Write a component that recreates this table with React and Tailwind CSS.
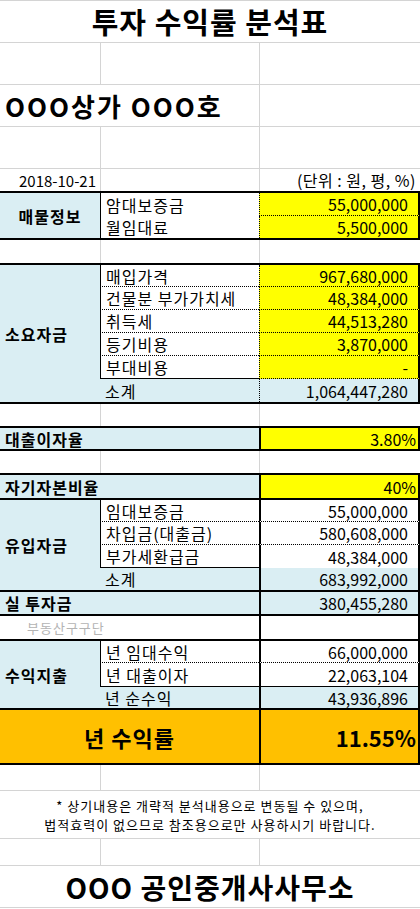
const FONT = "font-['Noto_Sans_CJK_KR','Noto_Sans',sans-serif]";
const GRID = 'grid grid-cols-[100px_159px_161px]';
const LABEL = 'flex items-center whitespace-nowrap pl-[5px] tracking-[1px]';
const VALUE = 'flex items-center justify-end whitespace-nowrap pr-[10px]';
const PCT = 'flex items-center justify-end whitespace-nowrap pr-[2px]';
const HEAD = 'flex items-center whitespace-nowrap pl-[5px] text-[16px] font-semibold tracking-[1px]';

function Blank({ className = '' }) {
  return (
    <div className={`${GRID} ${className}`}>
      <div />
      <div className="border-l border-[#d4d4d4]" />
      <div className="border-l border-[#d4d4d4]" />
    </div>
  );
}

export default function App() {
  return (
    <div className={`${FONT} w-[420px] bg-white text-[16px] leading-none text-black`}>
      <div className="flex h-[43px] items-center justify-center border-y border-[#d4d4d4] text-[29px] font-bold tracking-[1px]">투자 수익률 분석표</div>
      <Blank className="h-[42px] border-b border-[#d4d4d4]" />
      <div className={`${GRID} h-[42px] border-b border-[#d4d4d4]`}>
        <div className="col-span-2 flex items-center whitespace-nowrap pl-[5px] text-[26px] font-bold tracking-[2px]">OOO상가 OOO호</div>
        <div className="border-l border-[#d4d4d4]" />
      </div>
      <Blank className="h-[42px] border-b border-[#d4d4d4]" />

      <div className={`${GRID} h-[22px] text-[15px]`}>
        <div className="flex items-center justify-end pr-[4px]">2018-10-21</div>
        <div className="border-l border-[#d4d4d4]" />
        <div className="flex items-center justify-end border-l border-[#d4d4d4] pr-[4px] text-[16px] tracking-[0.5px]">(단위 : 원, 평, %)</div>
      </div>

      {/* 매물정보 */}
      <div className={`${GRID} border-y-2 border-black`}>
        <div className="row-span-2 flex items-center justify-center bg-[#daeef3] text-[16px] font-bold tracking-[1px]">매물정보</div>
        <div className={`${LABEL} h-[23px] border-l border-black`}>암대보증금</div>
        <div className={`${VALUE} h-[23px] border-b border-l border-r-2 border-black bg-[#ffff00] [border-bottom-style:dotted] [border-left-style:dotted]`}>55,000,000</div>
        <div className={`${LABEL} h-[22px] border-l border-black`}>월임대료</div>
        <div className={`${VALUE} h-[22px] border-l border-r-2 border-black bg-[#ffff00] [border-left-style:dotted]`}>5,500,000</div>
      </div>

      <Blank className="h-[23px]" />

      {/* 소요자금 */}
      <div className={`${GRID} border-y-2 border-black`}>
        <div className="row-span-6 flex items-center bg-[#daeef3] pl-[5px] text-[16px] font-bold tracking-[1px]">소요자금</div>
        <div className={`${LABEL} h-[22px] border-b border-l border-black [border-bottom-style:dotted]`}>매입가격</div>
        <div className={`${VALUE} h-[22px] border-b border-l border-r-2 border-black bg-[#ffff00] [border-bottom-style:dotted] [border-left-style:dotted]`}>967,680,000</div>
        <div className={`${LABEL} h-[23px] border-b border-l border-black [border-bottom-style:dotted]`}>건물분 부가가치세</div>
        <div className={`${VALUE} h-[23px] border-b border-l border-r-2 border-black bg-[#ffff00] [border-bottom-style:dotted] [border-left-style:dotted]`}>48,384,000</div>
        <div className={`${LABEL} h-[23px] border-b border-l border-black [border-bottom-style:dotted]`}>취득세</div>
        <div className={`${VALUE} h-[23px] border-b border-l border-r-2 border-black bg-[#ffff00] [border-bottom-style:dotted] [border-left-style:dotted]`}>44,513,280</div>
        <div className={`${LABEL} h-[23px] border-b border-l border-black [border-bottom-style:dotted]`}>등기비용</div>
        <div className={`${VALUE} h-[23px] border-b border-l border-r-2 border-black bg-[#ffff00] [border-bottom-style:dotted] [border-left-style:dotted]`}>3,870,000</div>
        <div className={`${LABEL} h-[23px] border-b border-l border-black`}>부대비용</div>
        <div className={`${VALUE} h-[23px] border-b border-l border-r-2 border-black bg-[#ffff00] [border-bottom-style:dotted] [border-left-style:dotted]`}>-</div>
        <div className={`${LABEL} h-[23px] bg-[#daeef3]`}>소계</div>
        <div className={`${VALUE} h-[23px] border-l border-r-2 border-black bg-[#daeef3] [border-left-style:dotted]`}>1,064,447,280</div>
      </div>

      <Blank className="h-[22px]" />

      {/* 대출이자율 */}
      <div className={`${GRID} h-[25px] border-y-2 border-black`}>
        <div className={`${HEAD} col-span-2 bg-[#daeef3]`}>대출이자율</div>
        <div className={`${PCT} border-l-2 border-r-2 border-black bg-[#ffff00]`}>3.80%</div>
      </div>

      <Blank className="h-[22px]" />

      {/* 자기자본비율 ~ 년 수익률 */}
      <div className={`${GRID} h-[27px] border-y-2 border-black`}>
        <div className={`${HEAD} col-span-2 bg-[#daeef3]`}>자기자본비율</div>
        <div className={`${PCT} border-l-2 border-r-2 border-black bg-[#ffff00]`}>40%</div>
      </div>

      <div className={`${GRID} border-b-2 border-black`}>
        <div className={`${HEAD} row-span-4 bg-[#daeef3]`}>유입자금</div>
        <div className={`${LABEL} h-[22px] border-b border-l border-black [border-bottom-style:dotted]`}>임대보증금</div>
        <div className={`${VALUE} h-[22px] border-b border-l-2 border-r-2 border-black [border-bottom-style:dotted]`}>55,000,000</div>
        <div className={`${LABEL} h-[23px] border-b border-l border-black [border-bottom-style:dotted]`}>차입금(대출금)</div>
        <div className={`${VALUE} h-[23px] border-b border-l-2 border-r-2 border-black [border-bottom-style:dotted]`}>580,608,000</div>
        <div className={`${LABEL} h-[23px] border-b border-l border-black`}>부가세환급금</div>
        <div className={`${VALUE} h-[23px] border-l-2 border-r-2 border-black`}>48,384,000</div>
        <div className={`${LABEL} h-[22px] bg-[#daeef3]`}>소계</div>
        <div className={`${VALUE} h-[22px] border-l-2 border-r-2 border-black bg-[#daeef3]`}>683,992,000</div>
      </div>

      <div className={`${GRID} h-[24px] border-b-2 border-black`}>
        <div className={`${HEAD} col-span-2 bg-[#daeef3]`}>실 투자금</div>
        <div className={`${VALUE} border-l-2 border-r-2 border-black bg-[#daeef3]`}>380,455,280</div>
      </div>

      <div className={`${GRID} h-[25px] border-b-2 border-black`}>
        <div className="col-span-2 flex items-center pl-[27px] text-[13px] tracking-[1px] text-[#b4b4b4]">부동산구구단</div>
        <div className="border-l-2 border-r-2 border-black" />
      </div>

      <div className={`${GRID} border-b-2 border-black`}>
        <div className={`${HEAD} row-span-3 bg-[#daeef3]`}>수익지출</div>
        <div className={`${LABEL} h-[22px] border-b border-l border-black [border-bottom-style:dotted]`}>년 임대수익</div>
        <div className={`${VALUE} h-[22px] border-b border-l-2 border-r-2 border-black [border-bottom-style:dotted]`}>66,000,000</div>
        <div className={`${LABEL} h-[24px] border-b border-l border-black`}>년 대출이자</div>
        <div className={`${VALUE} h-[24px] border-b border-l-2 border-r-2 border-black`}>22,063,104</div>
        <div className={`${LABEL} h-[21px] bg-[#daeef3]`}>년 순수익</div>
        <div className={`${VALUE} h-[21px] border-l-2 border-r-2 border-black bg-[#daeef3]`}>43,936,896</div>
      </div>

      <div className={`${GRID} h-[55px] border-b-2 border-black bg-[#ffc000]`}>
        <div className="col-span-2 flex items-center justify-center text-[22px] font-bold tracking-[1px]">년 수익률</div>
        <div className="flex items-center justify-end border-l-2 border-r-2 border-black pr-[2px] text-[22px] font-bold">11.55%</div>
      </div>

      <Blank className="h-[26px] border-b border-[#d4d4d4]" />
      <div className="flex h-[48px] flex-col items-center justify-center gap-[6px] border-b border-[#d4d4d4] text-[13px] tracking-[1px]">
        <p>* 상기내용은 개략적 분석내용으로 변동될 수 있으며,</p>
        <p>법적효력이 없으므로 참조용으로만 사용하시기 바랍니다.</p>
      </div>
      <Blank className="h-[27px] border-b border-[#d4d4d4]" />
      <div className="flex h-[42px] items-center justify-center border-b border-[#d4d4d4] text-[28px] font-bold tracking-[1px]">OOO 공인중개사사무소</div>
    </div>
  );
}
